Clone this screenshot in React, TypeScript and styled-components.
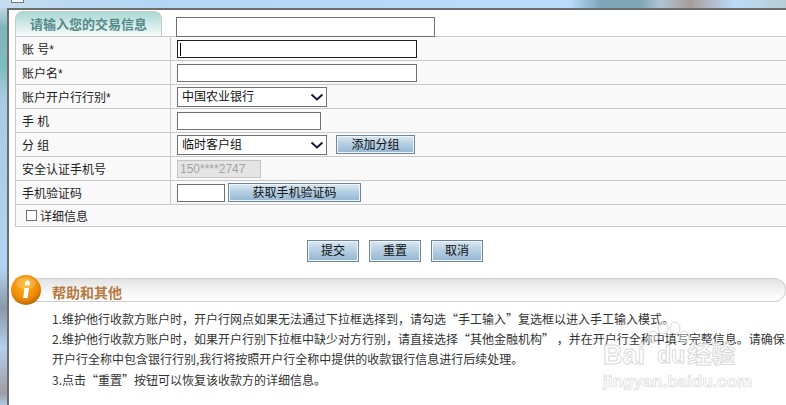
import React from "react";
import styled, { createGlobalStyle } from "styled-components";

const Global = createGlobalStyle`
  html, body { margin: 0; padding: 0; background: #fff; }
  body { font-family: "Liberation Sans", "Noto Sans CJK SC", sans-serif; font-size: 12px; color: #222; }
  * { box-sizing: border-box; }
`;

const Page = styled.div`
  position: relative;
  width: 786px;
  height: 405px;
  overflow: hidden;
  background: #fff;
`;

const TopBand = styled.div`
  position: relative;
  height: 8px;
  background: linear-gradient(90deg, #c4dcef 0, #b4d6f6 150px, #b9dcfd 500px, #b9dcfd 570px, #7ea6b8 600px, #7ea6b8 640px, #b0c4d4 660px, #a89c9a 690px, #b5c8dc 720px, #bcdcf8 735px, #b7ced6 786px);
`;

const TinyBox = styled.div`
  position: absolute;
  left: 11px;
  top: 0;
  width: 13px;
  height: 3px;
  background: #f4f6f8;
  border: 1px solid #777;
  border-top: 0;
`;

const Body = styled.div`
  display: flex;
  height: 397px;
`;

const LeftEdge = styled.div`
  width: 7px;
  flex: none;
  background: linear-gradient(180deg, #bcd4e4 0, #7fb5ba 20px, #7fbcc0 60px, #a9cbe4 90px, #b3d3f2 260px, #8a98a8 300px, #b3cfee 340px, #a09ca4 385px, #b0c8e4 397px);
`;

const Window = styled.div`
  flex: 1;
  min-width: 0;
  border-left: 2px solid #6c6c6c;
  border-top: 2px solid #6c6c6c;
  padding: 1px 0 0 6px;
  background: #fff;
`;

const FormHeader = styled.div`
  display: flex;
  height: 25px;
`;

const Tab = styled.div`
  width: 147px;
  height: 25px;
  border: 1px solid #c8c8c8;
  border-bottom: 0;
  border-radius: 8px 8px 0 0;
  background: linear-gradient(180deg, #a9d8d2 0, #d4ecea 55%, #f4fafa 100%);
  color: #55898a;
  font-size: 13px;
  font-weight: bold;
  line-height: 26px;
  padding-left: 14px;
`;

const HeaderInput = styled.input`
  width: 259px;
  height: 20px;
  margin: 6px 0 0 14px;
  border: 1px solid #707070;
  background: #fff;
  outline: none;
`;

const Table = styled.div`
  border-top: 1px solid #c8c8c8;
  border-left: 1px solid #c8c8c8;
`;

const Row = styled.div<{ $h?: number }>`
  display: flex;
  height: ${(p) => p.$h ?? 24}px;
  border-bottom: 1px solid #c8c8c8;
  background: #f9f9f9;
`;

const Label = styled.div`
  width: 155px;
  flex: none;
  border-right: 1px solid #c8c8c8;
  padding-left: 6px;
  display: flex;
  align-items: center;
  font-size: 12px;
  color: #1c1c1c;
  white-space: pre;
`;

const Field = styled.div`
  flex: 1;
  display: flex;
  align-items: center;
  padding-left: 6px;
  gap: 3px;
`;

const TextInput = styled.input<{ $w: number; $active?: boolean }>`
  width: ${(p) => p.$w}px;
  height: 18px;
  border: 1px solid ${(p) => (p.$active ? "#1e1e1e" : "#707070")};
  background: #fff;
  padding: 0 2px;
  outline: none;
  font-size: 12px;
`;

const Caret = styled.span`
  position: absolute;
  left: 180px;
  top: 43px;
  width: 1px;
  height: 13px;
  background: #000;
`;

const FakeSelect = styled.div`
  position: relative;
  width: 150px;
  height: 20px;
  border: 1px solid #707070;
  background: #fff;
  padding-left: 4px;
  font-size: 12px;
  line-height: 18px;
  color: #111;
`;

const Chevron = styled.svg`
  position: absolute;
  right: 2px;
  top: 5px;
`;

const Disabled = styled.div`
  width: 84px;
  height: 18px;
  border: 1px solid #c4c4c4;
  background: #e4e4e4;
  color: #a4a4a4;
  font-size: 12px;
  line-height: 16px;
  padding-left: 2px;
`;

const Button = styled.button<{ $w: number; $h?: number; $ml?: number }>`
  width: ${(p) => p.$w}px;
  height: ${(p) => p.$h ?? 19}px;
  margin-left: ${(p) => p.$ml ?? 0}px;
  padding: 0;
  border: 1px solid #6d8799;
  background: linear-gradient(180deg, #dbe8f0 0, #b6cfe2 45%, #94b6d2 100%);
  color: #111;
  font-family: inherit;
  font-size: 12px;
  line-height: 1;
  box-shadow: inset 0 0 0 1px #eef4f8;
`;

const CheckLabel = styled.div`
  display: flex;
  align-items: center;
  gap: 3px;
  padding-left: 10px;
  font-size: 12px;
  color: #1c1c1c;
`;

const CheckBox = styled.span`
  width: 11px;
  height: 11px;
  background: #fff;
  border: 1px solid #707070;
`;

const Actions = styled.div`
  display: flex;
  justify-content: flex-start;
  gap: 10px;
  padding: 13px 0 0 292px;
`;

const Help = styled.section`
  margin: 16px 0 0 -6px;
`;

const HelpBar = styled.div`
  position: relative;
  height: 24px;
  margin-left: 6px;
  padding-left: 37px;
  border: 1px solid #cfcfcf;
  border-left: 0;
  border-radius: 0 12px 12px 0;
  background: linear-gradient(180deg, #e2e2e2 0, #f6f6f6 60%, #fff 100%);
  color: #b77a42;
  font-size: 14px;
  font-weight: bold;
  line-height: 28px;
`;

const HelpIcon = styled.svg`
  position: absolute;
  left: -5px;
  top: -5px;
`;

const HelpText = styled.div`
  padding: 7px 0 0 43px;
  font-family: "Noto Sans CJK SC", sans-serif;
  font-size: 12px;
  line-height: 20.2px;
  color: #333;
  white-space: pre;
`;

const Watermark = styled.div`
  position: absolute;
  left: 603px;
  top: 322px;
  width: 170px;
  padding-top: 24px;
  color: #fff;
  opacity: 0.85;
  pointer-events: none;
  -webkit-text-stroke: 1px #d4d4d4;
  font-family: "Liberation Sans", "Noto Sans CJK SC", sans-serif;
`;

const MarkLogo = styled.div`
  display: flex;
  align-items: center;
  height: 18px;
  font-size: 27px;
  line-height: 18px;
  font-weight: bold;
`;

const MarkDu = styled.span`
  margin-left: 12px;
  font-size: 23px;
`;

const MarkCn = styled.span`
  font-size: 24px;
  margin-left: 2px;
`;

const MarkUrl = styled.div`
  font-size: 17px;
  font-weight: bold;
  line-height: 16px;
  -webkit-text-stroke: 0.7px #d4d4d4;
  margin-top: 10px;
`;

const PawWrap = styled.svg`
  position: absolute;
  left: 40px;
  top: -1px;
`;

const helpLines = [
  "1.维护他行收款方账户时，开户行网点如果无法通过下拉框选择到，请勾选“手工输入”复选框以进入手工输入模式。",
  "2.维护他行收款方账户时，如果开户行别下拉框中缺少对方行别，请直接选择“其他金融机构” ，并在开户行全称中填写完整信息。请确保",
  "开户行全称中包含银行行别,我行将按照开户行全称中提供的收款银行信息进行后续处理。",
  "3.点击“重置”按钮可以恢复该收款方的详细信息。",
];

function Arrow() {
  return (
    <Chevron width="14" height="8" viewBox="0 0 14 8">
      <path d="M1.5 1.5 L7 6.5 L12.5 1.5" fill="none" stroke="#1a1a3a" strokeWidth="2" />
    </Chevron>
  );
}

export default function App() {
  return (
    <Page>
      <Global />
      <TopBand>
        <TinyBox />
      </TopBand>
      <Body>
        <LeftEdge />
        <Window>
          <FormHeader>
            <Tab>请输入您的交易信息</Tab>
            <HeaderInput />
          </FormHeader>
          <Table>
            <Row>
              <Label>账 号*</Label>
              <Field><TextInput $w={240} $active /></Field>
            </Row>
            <Row>
              <Label>账户名*</Label>
              <Field><TextInput $w={240} /></Field>
            </Row>
            <Row>
              <Label>账户开户行行别*</Label>
              <Field><FakeSelect>中国农业银行<Arrow /></FakeSelect></Field>
            </Row>
            <Row>
              <Label>手 机</Label>
              <Field><TextInput $w={144} /></Field>
            </Row>
            <Row>
              <Label>分 组</Label>
              <Field>
                <FakeSelect>临时客户组<Arrow /></FakeSelect>
                <Button $w={79} $ml={6}>添加分组</Button>
              </Field>
            </Row>
            <Row>
              <Label>安全认证手机号</Label>
              <Field><Disabled>150****2747</Disabled></Field>
            </Row>
            <Row>
              <Label>手机验证码</Label>
              <Field>
                <TextInput $w={48} />
                <Button $w={133}>获取手机验证码</Button>
              </Field>
            </Row>
            <Row $h={22}>
              <CheckLabel><CheckBox />详细信息</CheckLabel>
            </Row>
          </Table>
          <Actions>
            <Button $w={52} $h={22}>提交</Button>
            <Button $w={52} $h={22}>重置</Button>
            <Button $w={52} $h={22}>取消</Button>
          </Actions>
          <Help>
            <HelpBar>
              <HelpIcon width="32" height="33" viewBox="0 0 32 33">
                <defs>
                  <radialGradient id="orb" cx="45%" cy="35%" r="70%">
                    <stop offset="0%" stopColor="#ffb21e" />
                    <stop offset="65%" stopColor="#f08a06" />
                    <stop offset="100%" stopColor="#a85f06" />
                  </radialGradient>
                </defs>
                <circle cx="16" cy="16" r="15" fill="url(#orb)" />
                <ellipse cx="16" cy="9" rx="10" ry="6" fill="#fff" opacity="0.18" />
                <circle cx="17.5" cy="9" r="2.6" fill="#fff" />
                <path d="M14.5 14 L19 14 L17.6 24 L13.2 24 Z" fill="#fff" />
              </HelpIcon>
              帮助和其他
            </HelpBar>
            <HelpText>
              {helpLines.map((l) => (
                <div key={l}>{l}</div>
              ))}
            </HelpText>
          </Help>
        </Window>
      </Body>
      <Caret />
      <Watermark>
        <PawWrap width="50" height="30" viewBox="0 0 50 30">
          <g fill="#fff" fillOpacity="0.45" stroke="#d4d4d4" strokeWidth="1">
            <ellipse cx="10" cy="16" rx="5" ry="6" />
            <ellipse cx="20" cy="7" rx="5" ry="6" />
            <ellipse cx="32" cy="7" rx="5" ry="6" />
            <ellipse cx="41" cy="16" rx="5" ry="6" />
          </g>
        </PawWrap>
        <MarkLogo>Bai<MarkDu>du</MarkDu><MarkCn>经验</MarkCn></MarkLogo>
        <MarkUrl>jingyan.baidu.com</MarkUrl>
      </Watermark>
    </Page>
  );
}
